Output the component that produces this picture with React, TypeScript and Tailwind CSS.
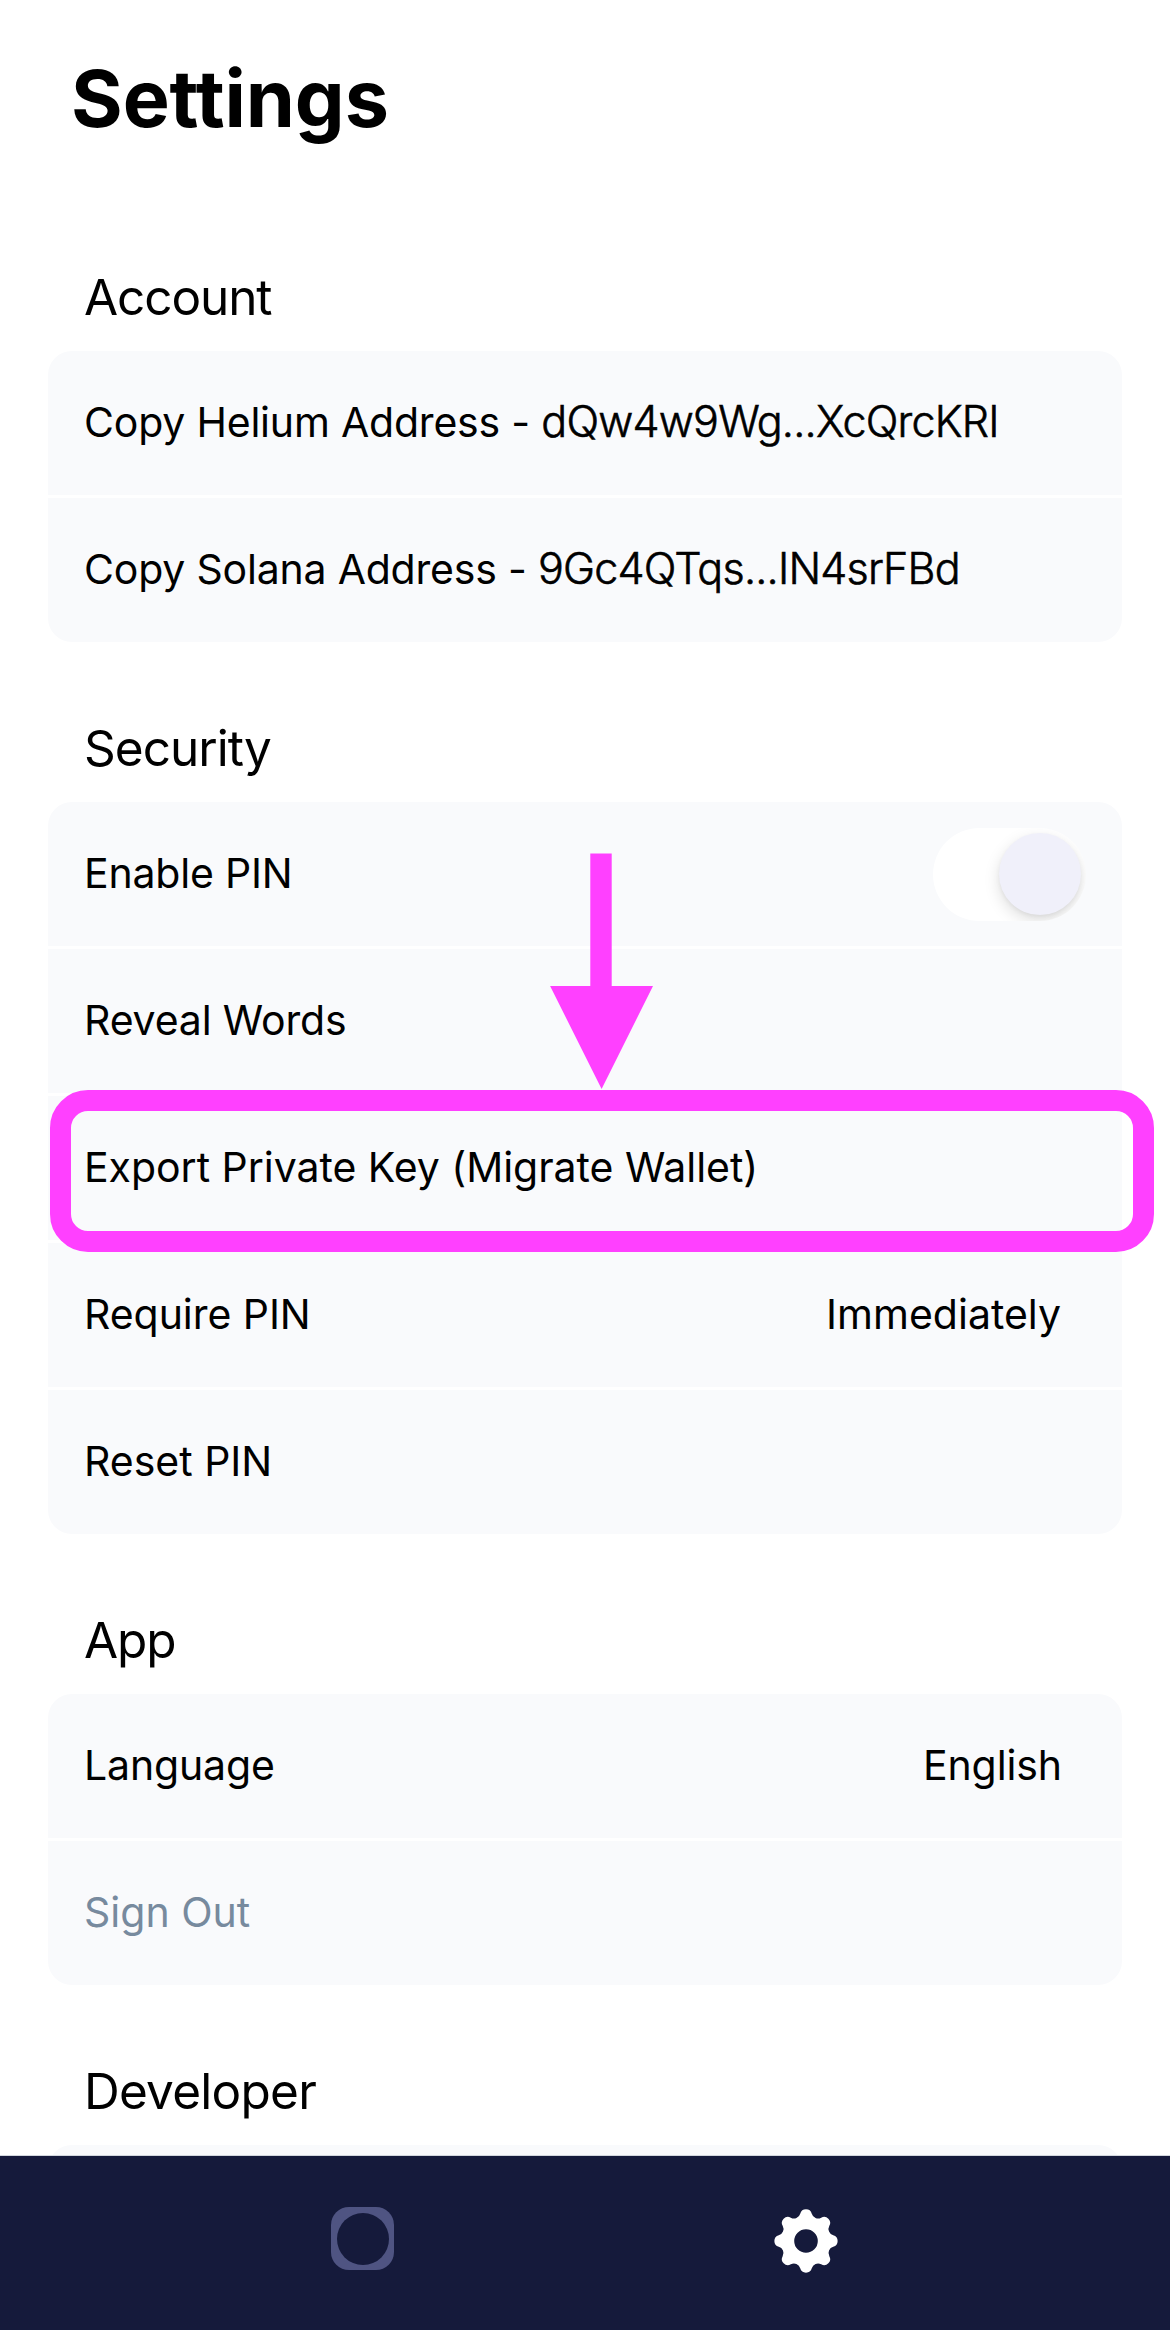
import type { ReactNode } from "react";

/** Settings glyph: eight rounded teeth joined by concave arcs, with a round hole. */
function gearPath(): string {
  const toothDistance = 25.6;
  const toothRadius = 6;
  const valleyDistance = 31.4;
  const valleyRadius = 6.48;
  const step = Math.PI / 4;
  const join = toothRadius / (toothRadius + valleyRadius);
  const point = (distance: number, angle: number) => [
    32 + distance * Math.cos(angle),
    32 + distance * Math.sin(angle),
  ];
  const mix = (a: number[], b: number[]) =>
    `${(a[0] + (b[0] - a[0]) * join).toFixed(2)} ${(a[1] + (b[1] - a[1]) * join).toFixed(2)}`;
  let d = "";
  for (let i = 0; i < 8; i++) {
    const angle = i * step;
    const tooth = point(toothDistance, angle);
    const before = mix(tooth, point(valleyDistance, angle - step / 2));
    const after = mix(tooth, point(valleyDistance, angle + step / 2));
    d +=
      i === 0
        ? `M${before}`
        : `A${valleyRadius} ${valleyRadius} 0 0 0 ${before}`;
    d += `A${toothRadius} ${toothRadius} 0 0 1 ${after}`;
  }
  const first = mix(point(toothDistance, 0), point(valleyDistance, -step / 2));
  d += `A${valleyRadius} ${valleyRadius} 0 0 0 ${first}Z`;
  return d + "M20.2 32a11.8 11.8 0 1 0 23.6 0a11.8 11.8 0 1 0 -23.6 0Z";
}

function GearIcon() {
  return (
    <svg viewBox="0 0 64 64" className="size-16 fill-white">
      <path d={gearPath()} fillRule="evenodd" />
    </svg>
  );
}

function CollectablesIcon() {
  return (
    <span className="flex size-[63px] items-center justify-center rounded-[18px] bg-[#4f5482]">
      <span className="size-[52px] rounded-full bg-[#151a3b]" />
    </span>
  );
}

function Toggle() {
  return (
    <span className="mr-9 flex h-[93px] w-[153px] items-center justify-end overflow-hidden rounded-full bg-white pr-[5px]">
      <span className="size-[82px] rounded-full bg-[#f0f0fa] shadow-[0_6px_16px_rgba(0,0,0,0.13),0_2px_4px_rgba(0,0,0,0.05)]" />
    </span>
  );
}

function Row({ label, children }: { label: ReactNode; children?: ReactNode }) {
  return (
    <div className="relative flex h-36 items-center justify-between bg-[#f9fafc] pl-9 text-[41px] leading-[60px]">
      <span className="pb-0.5 whitespace-pre">{label}</span>
      {children}
    </div>
  );
}

function AddressLabel({ name, address }: { name: string; address: string }) {
  return (
    <span className="flex items-baseline pb-0.5">
      <span className="tracking-[-0.2px]">{name} - </span>
      <span className="text-[43px] font-light tracking-[-0.78px] [-webkit-text-stroke:0.6px_black]">
        {address}
      </span>
    </span>
  );
}

function Section({ title, children }: { title: ReactNode; children?: ReactNode }) {
  return (
    <section className="flex flex-col">
      <h2 className="flex h-40 items-end pb-5 pl-9 text-[49.5px] leading-[68px] tracking-[-1.1px]">
        {title}
      </h2>
      <div className="flex flex-col gap-[3px]">{children}</div>
    </section>
  );
}

/** Pink arrow and frame that point out one row. */
function Callout() {
  return (
    <>
      <svg
        viewBox="0 0 104 236"
        className="absolute top-[-243px] left-[502px] z-10 h-[236px] w-[104px] fill-[#ff40ff]"
      >
        <path d="M40.3 0.5H61.700V133H103L51.600 236L0.100 133H40.300Z" />
      </svg>
      <span className="absolute top-[-6px] left-[2px] z-10 h-[162px] w-[1104px] rounded-[38px] border-[21px] border-[#ff40ff]" />
    </>
  );
}

export default function App() {
  return (
    <div className="flex h-[2330px] w-[1170px] flex-col overflow-hidden bg-white font-['Inter',sans-serif] text-black">
      <main className="h-[2155px] shrink-0 overflow-hidden px-12">
        <h1 className="h-[191px] pt-[50px] pl-[23px] text-[79px] leading-[96px] font-bold tracking-[-0.1px]">
          Settings
        </h1>
        <Section title="Account">
          <div className="overflow-hidden rounded-t-3xl">
            <Row label={<AddressLabel name="Copy Helium Address" address="dQw4w9Wg...XcQrcKRI" />} />
          </div>
          <div className="overflow-hidden rounded-b-3xl">
            <Row label={<AddressLabel name="Copy Solana Address" address="9Gc4QTqs...IN4srFBd" />} />
          </div>
        </Section>
        <Section title={<span className="tracking-[-0.95px]">Security</span>}>
          <div className="overflow-hidden rounded-t-3xl">
            <Row label={<span className="tracking-[-0.2px]">Enable PIN</span>}>
              <Toggle />
            </Row>
          </div>
          <Row label={<span className="tracking-[-0.15px]">Reveal Words</span>} />
          <Row label={<span className="tracking-[-0.03px]">Export Private Key (Migrate Wallet)</span>}>
            <Callout />
          </Row>
          <Row label={<span className="tracking-[-0.05px]">Require PIN</span>}>
            <span className="pr-[61px] pb-0.5">Immediately</span>
          </Row>
          <div className="overflow-hidden rounded-b-3xl">
            <Row label="Reset PIN" />
          </div>
        </Section>
        <Section title="App">
          <div className="overflow-hidden rounded-t-3xl">
            <Row label={<span className="tracking-[-0.14px]">Language</span>}>
              <span className="pr-[60px] pb-0.5 tracking-[-0.1px]">English</span>
            </Row>
          </div>
          <div className="overflow-hidden rounded-b-3xl">
            <Row label={<span className="text-[#778a9e]">Sign Out</span>} />
          </div>
        </Section>
        <Section title={<span className="tracking-[-0.75px]">Developer</span>}>
          <div className="h-36 rounded-t-3xl bg-[#f9fafc]" />
        </Section>
      </main>
      <nav className="flex h-[175px] shrink-0 items-start border-t border-[#d3d7de] bg-[#151a3b]">
        <div className="flex w-[394px] justify-end pt-[51px]">
          <CollectablesIcon />
        </div>
        <div className="flex w-[444px] justify-end pt-[53px]">
          <GearIcon />
        </div>
      </nav>
    </div>
  );
}
